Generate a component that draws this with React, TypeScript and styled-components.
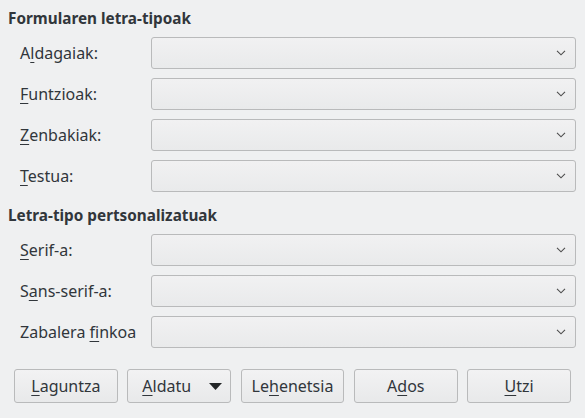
import React from "react";
import styled, { createGlobalStyle } from "styled-components";

const GlobalStyle = createGlobalStyle`
  html, body {
    margin: 0;
    padding: 0;
    background: #eff0f1;
  }
  body {
    font-family: "Noto Sans", "Open Sans", sans-serif;
    font-size: 16px;
    color: #232627;
  }
`;

const Dialog = styled.div`
  width: 585px;
  height: 418px;
  box-sizing: border-box;
  padding: 8px 9px 15px 8px;
  display: flex;
  flex-direction: column;
`;

const Section = styled.section`
  display: flex;
  flex-direction: column;
  gap: 9px;
  margin-bottom: 13px;
`;

const SectionTitle = styled.h2`
  margin: 0;
  height: 20px;
  line-height: 20px;
  font-size: 15.3px;
  font-weight: 700;
  color: #31363b;
`;

const Row = styled.div`
  display: grid;
  grid-template-columns: 131px 1fr;
  align-items: center;
  padding-left: 12px;
  height: 32px;
`;

const Label = styled.label`
  font-size: 16px;
  color: #31363b;
`;

const Mnemonic = styled.span`
  text-decoration: underline;
  text-underline-offset: 3px;
  text-decoration-thickness: 1px;
`;

const Combo = styled.div`
  height: 32px;
  box-sizing: border-box;
  border: 1px solid #b9babb;
  border-radius: 3px;
  background: linear-gradient(#f1f1f2, #e9eaeb);
  display: flex;
  align-items: center;
  justify-content: flex-end;
  padding-right: 9px;
`;

const ButtonBar = styled.div`
  margin-top: auto;
  padding-left: 6px;
  padding-right: 5px;
  display: grid;
  grid-template-columns: repeat(5, 1fr);
  gap: 9.5px;
`;

const Button = styled.button<{ $menu?: boolean }>`
  height: 34px;
  box-sizing: border-box;
  border: 1px solid #b9babb;
  border-radius: 3px;
  background: linear-gradient(#f2f2f3, #e8e9ea);
  font-family: inherit;
  font-size: 16px;
  color: #31363b;
  display: flex;
  align-items: center;
  justify-content: ${(p) => (p.$menu ? "space-between" : "center")};
  padding: ${(p) => (p.$menu ? "0 8px 0 14px" : "0")};
`;

const Chevron = () => (
  <svg width="10" height="6" viewBox="0 0 10 6">
    <path d="M1 0.8 L5 4.8 L9 0.8" fill="none" stroke="#4d4d4d" strokeWidth="1.1" />
  </svg>
);

const Triangle = () => (
  <svg width="13" height="7" viewBox="0 0 13 7">
    <path d="M0 0 H13 L6.5 7 Z" fill="#232627" />
  </svg>
);

type Field = { pre: string; key: string; post: string };

const formFonts: Field[] = [
  { pre: "A", key: "l", post: "dagaiak:" },
  { pre: "", key: "F", post: "untzioak:" },
  { pre: "", key: "Z", post: "enbakiak:" },
  { pre: "", key: "T", post: "estua:" },
];

const customFonts: Field[] = [
  { pre: "", key: "S", post: "erif-a:" },
  { pre: "S", key: "a", post: "ns-serif-a:" },
  { pre: "Zabalera ", key: "f", post: "inkoa" },
];

const Text = ({ f }: { f: Field }) => (
  <>
    {f.pre}
    <Mnemonic>{f.key}</Mnemonic>
    {f.post}
  </>
);

const Group = ({ title, fields }: { title: string; fields: Field[] }) => (
  <Section>
    <SectionTitle>{title}</SectionTitle>
    {fields.map((f, i) => (
      <Row key={i}>
        <Label>
          <Text f={f} />
        </Label>
        <Combo>
          <Chevron />
        </Combo>
      </Row>
    ))}
  </Section>
);

export default function App() {
  return (
    <>
      <GlobalStyle />
      <Dialog>
        <Group title="Formularen letra-tipoak" fields={formFonts} />
        <Group title="Letra-tipo pertsonalizatuak" fields={customFonts} />
        <ButtonBar>
          <Button>
            <Text f={{ pre: "", key: "L", post: "aguntza" }} />
          </Button>
          <Button $menu>
            <span>
              <Text f={{ pre: "", key: "A", post: "ldatu" }} />
            </span>
            <Triangle />
          </Button>
          <Button>
            <Text f={{ pre: "Le", key: "h", post: "enetsia" }} />
          </Button>
          <Button>
            <Text f={{ pre: "A", key: "d", post: "os" }} />
          </Button>
          <Button>
            <Text f={{ pre: "", key: "U", post: "tzi" }} />
          </Button>
        </ButtonBar>
      </Dialog>
    </>
  );
}
